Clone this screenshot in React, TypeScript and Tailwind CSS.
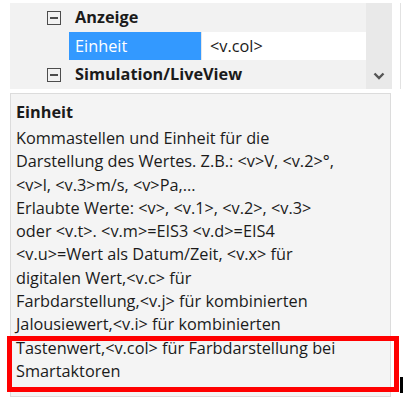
import React from 'react';

const LINES = [
  'Kommastellen und Einheit für die',
  'Darstellung des Wertes. Z.B.: <v>V, <v.2>°,',
  '<v>l, <v.3>m/s, <v>Pa,...',
  'Erlaubte Werte: <v>, <v.1>, <v.2>, <v.3>',
  'oder <v.t>. <v.m>=EIS3 <v.d>=EIS4',
  '<v.u>=Wert als Datum/Zeit, <v.x> für',
  'digitalen Wert,<v.c> für',
  'Farbdarstellung,<v.j> für kombinierten',
  'Jalousiewert,<v.i> für kombinierten',
];

const MARKED = ['Tastenwert,<v.col> für Farbdarstellung bei', 'Smartaktoren'];

function MinusBox() {
  return (
    <div className="w-[14px] h-[14px] border-[1.5px] border-[#4d4d4d] flex items-center justify-center shrink-0">
      <div className="w-[8px] h-[2px] bg-[#4d4d4d]" />
    </div>
  );
}

function GroupRow({ label }: { label: string }) {
  return (
    <div className="h-[29px] flex items-center pl-[37px] gap-[14px]">
      <MinusBox />
      <span className="font-bold text-[16.3px]">{label}</span>
    </div>
  );
}

export default function App() {
  return (
    <div className="w-[403px] h-[400px] bg-white relative overflow-hidden font-['Open_Sans',sans-serif] text-[#1b1b1b]">
      {/* property tree */}
      <div className="flex pl-[10px] pt-[3px] h-[89px]">
        <div className="w-[356px] bg-[#f2f2f2] flex flex-col">
          <GroupRow label="Anzeige" />
          <div className="h-[28px] flex">
            <div className="w-[59px]" />
            <div className="w-[132px] bg-[#3399ff] text-white text-[16.3px] flex items-center pl-[6px]">Einheit</div>
            <div className="flex-1 bg-white text-[16.3px] flex items-center pl-[8px] border-l border-[#e6e6e6]">&lt;v.col&gt;</div>
          </div>
          <GroupRow label="Simulation/LiveView" />
        </div>
        <div className="w-[26px] bg-[#e9e9e9] flex items-end justify-center pb-[9px]">
          <svg width="12" height="8" viewBox="0 0 12 8">
            <polyline points="1.5,1.5 6,6 10.5,1.5" fill="none" stroke="#555" strokeWidth="2.4" />
          </svg>
        </div>
        <div className="flex-1 border-r border-[#e2e2e2] mr-[2px]" />
      </div>

      {/* description panel */}
      <div className="mt-[4px] ml-[10px] w-[381px] h-[304px] border border-[#dcdcdc] bg-[#f4f4f4] pl-[5px] pt-[7px] text-[16.3px]">
        <div className="font-bold leading-[23px] mb-[3px] whitespace-nowrap">Einheit</div>
        {LINES.concat(MARKED).map((line, i) => (
          <div key={i} className="leading-[23.3px] whitespace-nowrap">{line}</div>
        ))}
      </div>

      {/* annotation */}
      <div className="absolute left-[7px] top-[336px] w-[392px] h-[56px] border-[5px] border-[#ff0000]" />
      <div className="absolute left-[400px] top-[377px] w-[3px] h-[16px] bg-black" />
    </div>
  );
}
